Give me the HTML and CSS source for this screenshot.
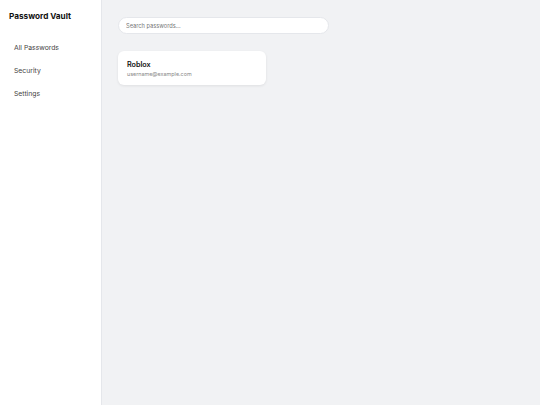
FILE: index.html
```html
<!DOCTYPE html>
<html lang="en">
<head>
<meta charset="UTF-8">
<title>Password Vault</title>
<link rel="stylesheet" href="styles.css">
</head>
<body>
<div class="app">
    <aside class="sidebar">
        <h1 class="brand">Password Vault</h1>
        <ul class="nav">
            <li>All Passwords</li>
            <li>Security</li>
            <li>Settings</li>
        </ul>
    </aside>
    <main class="main">
        <input class="search" type="text" placeholder="Search passwords...">
        <div class="cards">
            <div class="card">
                <div class="card-title">Roblox</div>
                <div class="card-user">username@example.com</div>
            </div>
        </div>
    </main>
</div>
</body>
</html>
```

FILE: styles.css
```css
body, html {
    height: 100%;
    margin: 0;
    font-family: Inter, "Noto Sans", sans-serif;
}

.app {
    display: flex;
    height: 100%;
}

.sidebar {
    width: 102px;
    background: #fff;
    border-right: 1px solid #e5e7eb;
    padding: 11px 0 0 9px;
    box-sizing: border-box;
    flex-shrink: 0;
}

.brand {
    margin: 0;
    font-size: 8.2px;
    font-weight: 700;
    color: #111;
    line-height: 11px;
}

.nav {
    list-style: none;
    margin: 21px 0 0;
    padding: 0 0 0 5px;
}

.nav li {
    font-size: 6.8px;
    color: #444;
    line-height: 9px;
    margin-bottom: 14px;
}

.main {
    flex: 1;
    background: #f1f2f4;
    padding: 17px 0 0 16px;
}

.search {
    display: block;
    width: 211px;
    height: 17px;
    box-sizing: border-box;
    border: 1px solid #e5e7eb;
    border-radius: 9px;
    background: #fff;
    padding: 0 7px;
    font-family: inherit;
    font-size: 5.7px;
    outline: none;
}

.search::placeholder {
    color: #777;
}

.cards {
    margin-top: 17px;
}

.card {
    width: 148px;
    height: 34px;
    box-sizing: border-box;
    background: #fff;
    border-radius: 6px;
    box-shadow: 0 1px 3px rgba(0, 0, 0, 0.08);
    padding: 9px 9px 0;
}

.card-title {
    font-size: 7.2px;
    font-weight: 600;
    color: #111;
    line-height: 9px;
}

.card-user {
    font-size: 5.4px;
    color: #888;
    margin-top: 1px;
    line-height: 8px;
}
```
